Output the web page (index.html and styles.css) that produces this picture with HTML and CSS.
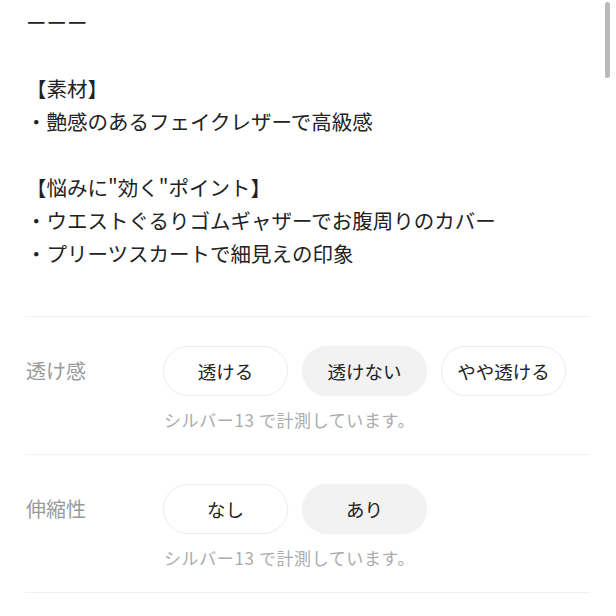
FILE: index.html
```html
<!DOCTYPE html>
<html lang="ja">
<head>
<meta charset="utf-8">
<link rel="stylesheet" href="styles.css">
</head>
<body>
<div class="page">
  <div class="desc">
    <p class="line">ーーー</p>
    <p class="line blank">&nbsp;</p>
    <p class="line">【素材】</p>
    <p class="line">・艶感のあるフェイクレザーで高級感</p>
    <p class="line blank">&nbsp;</p>
    <p class="line">【悩みに"効く"ポイント】</p>
    <p class="line">・ウエストぐるりゴムギャザーでお腹周りのカバー</p>
    <p class="line">・プリーツスカートで細見えの印象</p>
  </div>

  <section class="spec">
    <div class="spec-row">
      <div class="spec-label">透け感</div>
      <div class="spec-body">
        <div class="chips">
          <span class="chip">透ける</span>
          <span class="chip active">透けない</span>
          <span class="chip">やや透ける</span>
        </div>
        <p class="note">シルバー13 で計測しています。</p>
      </div>
    </div>
  </section>

  <section class="spec">
    <div class="spec-row">
      <div class="spec-label">伸縮性</div>
      <div class="spec-body">
        <div class="chips">
          <span class="chip">なし</span>
          <span class="chip active">あり</span>
        </div>
        <p class="note">シルバー13 で計測しています。</p>
      </div>
    </div>
  </section>
  <section class="spec end"></section>
</div>
<div class="scrollbar"></div>
</body>
</html>
```

FILE: styles.css
```css
html, body {
  margin: 0;
  padding: 0;
  background: #ffffff;
}
body {
  font-family: "Noto Sans CJK JP", "Noto Sans", sans-serif;
  color: #222222;
  overflow: hidden;
}
.page {
  padding-top: 6px;
}
.desc {
  padding: 0 26px;
  font-size: 20.5px;
  line-height: 33px;
  margin-bottom: 46px;
}
.line {
  margin: 0;
  white-space: nowrap;
}
.spec {
  margin: 0 26px 0 25px;
  border-top: 1px solid #f1f1f1;
  padding: 29px 0 23px;
}
.spec.end {
  padding: 0;
}
.spec-row {
  display: grid;
  grid-template-columns: 138px 1fr;
  align-items: start;
}
.spec-label {
  font-size: 20px;
  line-height: 50px;
  color: #9a9a9a;
  padding-left: 1px;
}
.chips {
  display: flex;
  gap: 14px;
}
.chip {
  box-sizing: border-box;
  width: 125px;
  height: 50px;
  border-radius: 25px;
  border: 1px solid #ededed;
  background: #ffffff;
  display: flex;
  align-items: center;
  justify-content: center;
  font-size: 18.5px;
  color: #222222;
  box-shadow: 0 0 2px rgba(0,0,0,0.03);
}
.chip.active {
  background: #f2f2f2;
  border-color: #f2f2f2;
}
.note {
  margin: 13px 0 0 1px;
  font-size: 17px;
  line-height: 22px;
  letter-spacing: 0.6px;
  color: #ababab;
  white-space: nowrap;
}
.scrollbar {
  position: fixed;
  top: 2px;
  right: 6px;
  width: 5px;
  height: 76px;
  border-radius: 3px;
  background: #b9b9b9;
}
```
